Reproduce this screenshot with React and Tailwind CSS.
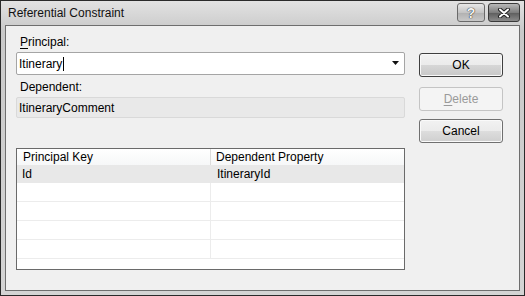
import React from "react";

const font = { fontFamily: '"Liberation Sans", Arial, sans-serif' };

const rows = [
  { key: "Id", prop: "ItineraryId" },
  { key: "", prop: "" },
  { key: "", prop: "" },
  { key: "", prop: "" },
  { key: "", prop: "" },
];

const DlgButton = ({ children, isDefault, disabled }) => (
  <button
    disabled={disabled}
    className={
      "h-[24px] w-[84px] rounded-[3px] border text-[12px] leading-none " +
      (disabled
        ? "border-[#c4c4c4] bg-[#f4f4f4] text-[#9a9a9a]"
        : isDefault
        ? "border-[#3f3f3f] bg-[linear-gradient(#f2f2f2_0%,#ebebeb_50%,#d6d6d6_51%,#c8c8c8_100%)] text-black shadow-[inset_0_0_0_1px_#f8f8f8]"
        : "border-[#707070] bg-[linear-gradient(#f2f2f2_0%,#ebebeb_50%,#dddddd_51%,#cfcfcf_100%)] text-black shadow-[inset_0_0_0_1px_#fafafa]")
    }
  >
    {children}
  </button>
);

export default function App() {
  return (
    <div
      style={font}
      className="flex h-[296px] w-[525px] flex-col border border-[#2a2a2a] bg-[linear-gradient(#e2e2e2,#c9c9c9_30px,#d4d4d4)] px-[4px] pb-[4px] text-[12px] text-black"
    >
      {/* title bar */}
      <div className="flex h-[24px] items-center justify-between">
        <span className="pl-[3px] text-[12px] text-[#111]">Referential Constraint</span>
        <div className="mt-[-1px] flex gap-[3px]">
          <div className="flex h-[19px] w-[28px] items-center justify-center rounded-[3px] border border-[#6a6a6a] bg-[linear-gradient(#e8e8e8,#c4c4c4_50%,#b0b0b0_51%,#c8c8c8)]">
            <span className="text-[14px] font-bold leading-none text-[#f4f4f4] [text-shadow:0_0_1px_#222,0_0_1px_#222]">?</span>
          </div>
          <div className="flex h-[19px] w-[32px] items-center justify-center rounded-[3px] border border-[#3a3a3a] bg-[linear-gradient(#b8b8b8,#7e7e7e_50%,#5c5c5c_51%,#8a8a8a)]">
            <svg width="14" height="10" viewBox="0 0 14 10">
              <path d="M3 1.5 L11 8.5 M11 1.5 L3 8.5" stroke="#222" strokeWidth="4" strokeLinecap="round" />
              <path d="M3 1.5 L11 8.5 M11 1.5 L3 8.5" stroke="#fff" strokeWidth="2" strokeLinecap="round" />
            </svg>
          </div>
        </div>
      </div>

      {/* client area */}
      <div className="flex flex-1 border border-[#6e6e6e] bg-[#f0f0f0] pl-[10px] pr-[15px]">
        <div className="flex w-[389px] flex-col">
          <div className="mt-[8px] h-[16px] pl-[4px] leading-[16px]">
            <span className="underline underline-offset-2">P</span>rincipal:
          </div>
          <div className="mt-[2px] flex h-[23px] items-center justify-between rounded-[2px] border border-[#a5a5a5] bg-white pl-[2px] pr-[4px]">
            <span className="flex items-center">
              Itinerary
              <span className="ml-[1px] inline-block h-[14px] w-[1px] bg-black" />
            </span>
            <svg width="8" height="5" viewBox="0 0 8 5">
              <path d="M0 0 H7 L3.5 4 Z" fill="#111" />
            </svg>
          </div>
          <div className="mt-[4px] h-[16px] pl-[4px] leading-[16px]">Dependent:</div>
          <div className="mt-[2px] flex h-[21px] items-center rounded-[2px] border border-[#d9d9d9] bg-[#e9e9e9] pl-[2px]">
            ItineraryComment
          </div>

          {/* grid */}
          <div className="mt-[30px] flex h-[122px] flex-col overflow-hidden border border-[#6a6a6a] bg-white">
            <div className="flex h-[16px] shrink-0 bg-[linear-gradient(#ffffff,#f6f7f8)] leading-[16px]">
              <div className="w-[194px] border-r border-[#dcdcdc] pl-[6px]">Principal Key</div>
              <div className="flex-1 pl-[5px]">Dependent Property</div>
            </div>
            <div className="flex h-[18px] shrink-0 items-center bg-[#e8e8e8]">
              <div className="w-[194px] pl-[5px]">{rows[0].key}</div>
              <div className="flex-1 pl-[6px]">{rows[0].prop}</div>
            </div>
            {rows.slice(1).map((r, i) => (
              <div key={i} className="flex h-[19px] shrink-0 border-b border-[#ececec]">
                <div className="w-[194px] border-r border-[#ececec]">{r.key}</div>
                <div className="flex-1">{r.prop}</div>
              </div>
            ))}
          </div>
        </div>

        <div className="ml-[14px] flex flex-col pt-[27px]">
          <DlgButton isDefault>OK</DlgButton>
          <div className="mt-[10px]">
            <DlgButton disabled>
              <span className="underline underline-offset-2">D</span>elete
            </DlgButton>
          </div>
          <div className="mt-[8px]">
            <DlgButton>Cancel</DlgButton>
          </div>
        </div>
      </div>
    </div>
  );
}
